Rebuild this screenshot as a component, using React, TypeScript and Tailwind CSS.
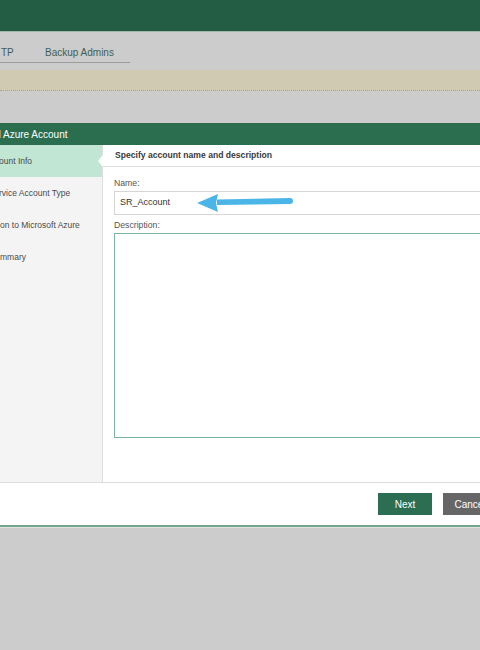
import React from "react";

export default function App() {
  return (
    <div className="relative w-[480px] h-[650px] overflow-hidden bg-[#cccccc] font-['Liberation_Sans',Arial,sans-serif]">
      {/* top header bar */}
      <div className="h-[32px] bg-[#235d44] border-b border-[#9fb5aa]" />

      {/* tabs */}
      <div className="h-[38px] pt-[9px]">
        <div className="w-[130px] h-[22px] border-b border-[#9c9c9c] flex items-center pt-[1px] text-[10px] text-[#3f5f55]">
          <span className="w-[45px] pl-[1px]">TP</span>
          <span>Backup Admins</span>
        </div>
      </div>

      {/* beige band */}
      <div className="h-[21px] bg-[#cfcab1] border-b border-dotted border-[#a9a58f]" />

      {/* gray gap */}
      <div className="h-[32px]" />

      {/* dialog */}
      <div className="bg-white">
        <div className="h-[22px] bg-[#2a6e4f] flex items-center text-[10px] text-white overflow-hidden">
          <span className="-ml-[17px] whitespace-nowrap">Add Azure Account</span>
        </div>

        <div className="flex h-[337px]">
          {/* steps */}
          <div className="w-[103px] shrink-0 bg-[#f4f4f4] border-r border-[#dedede] text-[8.5px] text-[#4a4a4a] whitespace-nowrap overflow-hidden">
            <div className="h-[32px] bg-[#c2e6d4] flex items-center pt-[1px]">
              <span className="-ml-[1px]">ount Info</span>
            </div>
            <div className="h-[32px] flex items-center pt-[1px]">
              <span className="-ml-[1px]">rvice Account Type</span>
            </div>
            <div className="h-[32px] flex items-center pt-[1px]">
              <span>on to Microsoft Azure</span>
            </div>
            <div className="h-[32px] flex items-center pt-[1px]">
              <span>mmary</span>
            </div>
          </div>

          {/* content */}
          <div className="relative flex-1">
            <div className="absolute -left-[5px] top-[10px] w-0 h-0 border-y-[6px] border-y-transparent border-r-[5px] border-r-white" />
            <div className="h-[22px] border-b border-[#dcdcdc] pl-[12px] flex items-center text-[8.6px] font-bold text-[#3a3a3a] whitespace-nowrap">
              Specify account name and description
            </div>
            <div className="pl-[11px] text-[8.7px] text-[#555555]">
              <div className="mt-[10px] h-[12px] leading-[12px]">Name:</div>
              <div className="mt-[2px] w-[400px] h-[24px] border border-[#d6d6d6] flex items-center pl-[5px] text-[9px] text-[#333333]">
                SR_Account
              </div>
              <div className="mt-[4px] h-[12px] leading-[12px]">Description:</div>
              <div className="mt-[2px] w-[400px] h-[205px] border border-[#7db39c]" />
            </div>

            {/* arrow annotation */}
            <svg
              className="absolute left-[93px] top-[45px]"
              width="100"
              height="24"
              viewBox="0 0 100 24"
            >
              <path
                d="M21 9.5 L94 8 Q97 8 97 11 Q97 14 94 14 L21 15 Z"
                fill="#4cb5e8"
              />
              <path d="M1 13 L22 4 L20 13 L22 22 Z" fill="#4cb5e8" />
            </svg>
          </div>
        </div>

        {/* footer */}
        <div className="h-[45px] border-t border-[#dcdcdc] border-b-2 border-b-[#6fa88f] flex items-start pt-[10px] pl-[378px] gap-[11px] text-[10px] text-white overflow-hidden">
          <div className="w-[54px] h-[22px] shrink-0 bg-[#2b6e51] flex items-center justify-center">Next</div>
          <div className="w-[54px] h-[22px] shrink-0 bg-[#666666] flex items-center justify-center">Cancel</div>
        </div>
      </div>
      <div className="h-[1px] bg-[#e2e2e2]" />
    </div>
  );
}
